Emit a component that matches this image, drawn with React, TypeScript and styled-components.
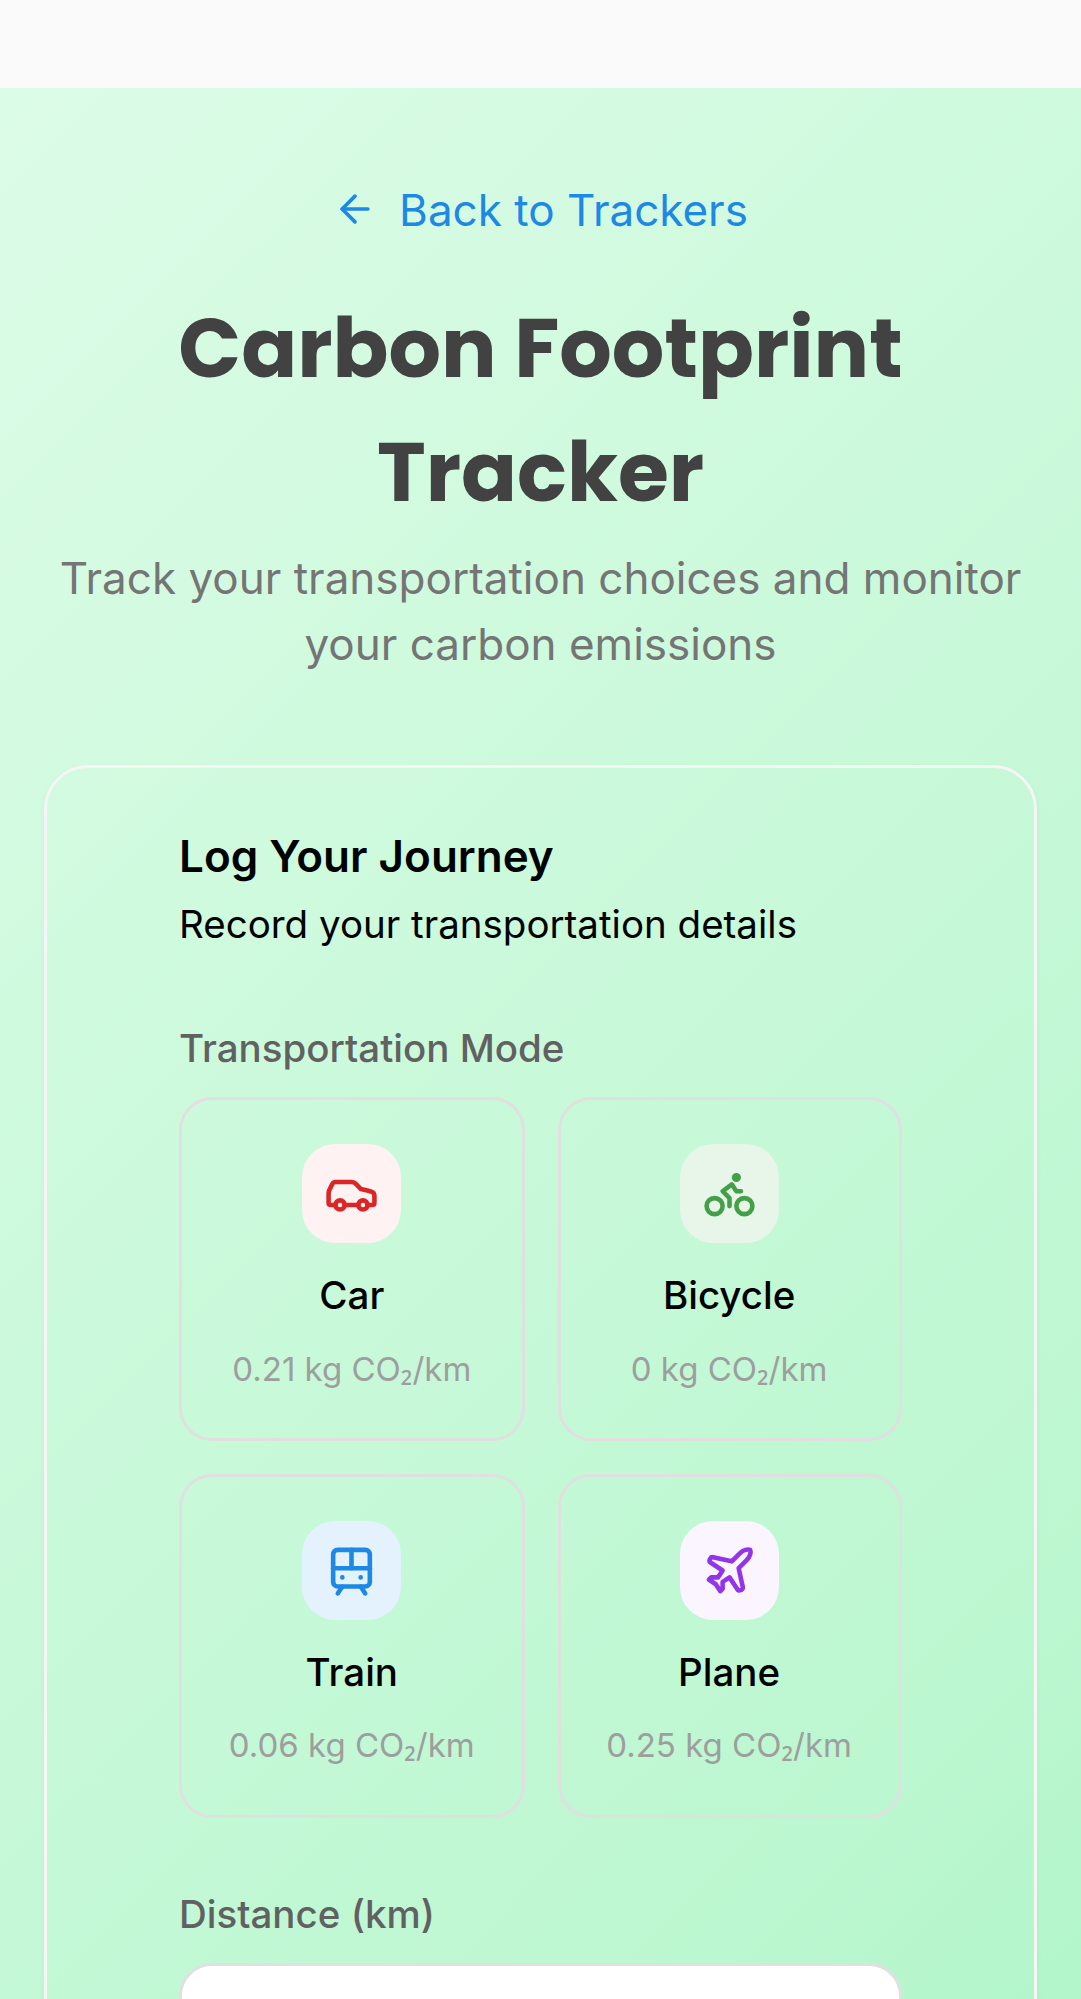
import React from 'react';
import styled, { createGlobalStyle } from 'styled-components';
import { ArrowLeft, Bike, Car, Plane, TramFront, type LucideIcon } from 'lucide-react';

const GlobalStyle = createGlobalStyle`
  *, *::before, *::after { box-sizing: border-box; }
  body {
    margin: 0;
    background: #fafafa;
    color: #000;
    font-family: Inter, 'Noto Sans', sans-serif;
    font-size: 44px;
    line-height: 1.5;
  }
  h1, h2, p { margin: 0; }
`;

const Screen = styled.div`
  height: 100vh;
  overflow: hidden;
  padding-top: 88px;
`;

const Page = styled.main`
  height: 4120px;
  padding: 88px 44px;
  background: linear-gradient(135deg, #dcfce7, #bbf7d0, #86efac);
`;

const Header = styled.header`
  display: flex;
  flex-direction: column;
  align-items: center;
  text-align: center;
  margin-bottom: 88px;
`;

const BackLink = styled.a`
  display: inline-flex;
  align-items: center;
  gap: 22px;
  height: 66px;
  margin-bottom: 44px;
  color: #1e88e5;
  text-decoration: none;
`;

const BackText = styled.span`
  padding-top: 2px;
`;

const Title = styled.h1`
  padding-top: 1px;
  margin-bottom: 10px;
  color: #424242;
  font-family: Poppins, Inter, sans-serif;
  font-size: 82.5px;
  font-weight: 700;
  line-height: 123.75px;
`;

const Subtitle = styled.p`
  color: #757575;
`;

const Card = styled.section`
  height: 3000px;
  padding: 66px 132px;
  border: 3px solid #f5f5f5;
  border-radius: 44px;
  box-shadow: 0 2.75px 5.5px rgba(0, 0, 0, 0.05);
`;

const CardHeader = styled.div`
  display: flex;
  flex-direction: column;
  gap: 16.5px;
  margin-bottom: 63.75px;
`;

const CardTitle = styled.h2`
  font-size: 44px;
  font-weight: 600;
  line-height: 44px;
`;

const CardDescription = styled.p`
  font-size: 38.5px;
  line-height: 60px;
`;

const Field = styled.div`
  display: flex;
  flex-direction: column;
  gap: 19.25px;
  margin-bottom: 66px;
`;

const FieldLabel = styled.label`
  color: #616161;
  font-size: 38.5px;
  font-weight: 500;
  line-height: 60px;
`;

const ModeGrid = styled.div`
  display: grid;
  grid-template-columns: 346.4fr 343.6fr;
  gap: 33px;
`;

const ModeButton = styled.button`
  display: flex;
  flex-direction: column;
  align-items: center;
  padding: 43.75px 0.8px 43.75px 0;
  border: 3px solid #e0e0e0;
  border-radius: 33px;
  background: transparent;
  color: #000;
  font: inherit;

  &:nth-child(even) {
    padding-right: 2.2px;
  }
`;

const IconTile = styled.span<{ $bg: string; $fg: string }>`
  display: flex;
  align-items: center;
  justify-content: center;
  width: 99px;
  height: 99px;
  margin-bottom: 22px;
  border-radius: 33px;
  background: ${({ $bg }) => $bg};
  color: ${({ $fg }) => $fg};
`;

const ModeName = styled.span`
  margin-bottom: 19.75px;
  font-size: 38.5px;
  font-weight: 500;
  line-height: 60px;
`;

const ModeRate = styled.span`
  color: #9e9e9e;
  font-size: 33px;
  line-height: 49.5px;
  white-space: nowrap;
`;

const Subscript = styled.span`
  font-family: 'Noto Sans', sans-serif;
  line-height: 0;
`;

const DistanceInput = styled.input`
  width: 100%;
  height: 138px;
  padding: 0 44px;
  border: 3px solid #e0e0e0;
  border-radius: 33px;
  background: #fff;
  font: inherit;
  outline: none;
`;

interface Mode {
  name: string;
  rate: string;
  icon: LucideIcon;
  bg: string;
  fg: string;
}

const modes: Mode[] = [
  { name: 'Car', rate: '0.21', icon: Car, bg: '#fef2f2', fg: '#dc2626' },
  { name: 'Bicycle', rate: '0', icon: Bike, bg: '#e8f5e9', fg: '#43a047' },
  { name: 'Train', rate: '0.06', icon: TramFront, bg: '#e3f2fd', fg: '#1e88e5' },
  { name: 'Plane', rate: '0.25', icon: Plane, bg: '#faf5ff', fg: '#9333ea' },
];

export default function App() {
  return (
    <>
      <GlobalStyle />
      <Screen>
        <Page>
          <Header>
            <BackLink href="#">
              <ArrowLeft size={44} />
              <BackText>Back to Trackers</BackText>
            </BackLink>
            <Title>Carbon Footprint Tracker</Title>
            <Subtitle>Track your transportation choices and monitor your carbon emissions</Subtitle>
          </Header>
          <Card>
            <CardHeader>
              <CardTitle>Log Your Journey</CardTitle>
              <CardDescription>Record your transportation details</CardDescription>
            </CardHeader>
            <Field>
              <FieldLabel as="span">Transportation Mode</FieldLabel>
              <ModeGrid>
                {modes.map(({ name, rate, icon: Icon, bg, fg }) => (
                  <ModeButton key={name} type="button">
                    <IconTile $bg={bg} $fg={fg}>
                      <Icon size={55} />
                    </IconTile>
                    <ModeName>{name}</ModeName>
                    <ModeRate>
                      {rate} kg CO<Subscript>₂</Subscript>/km
                    </ModeRate>
                  </ModeButton>
                ))}
              </ModeGrid>
            </Field>
            <Field>
              <FieldLabel htmlFor="distance">Distance (km)</FieldLabel>
              <DistanceInput id="distance" type="text" inputMode="decimal" />
            </Field>
          </Card>
        </Page>
      </Screen>
    </>
  );
}
